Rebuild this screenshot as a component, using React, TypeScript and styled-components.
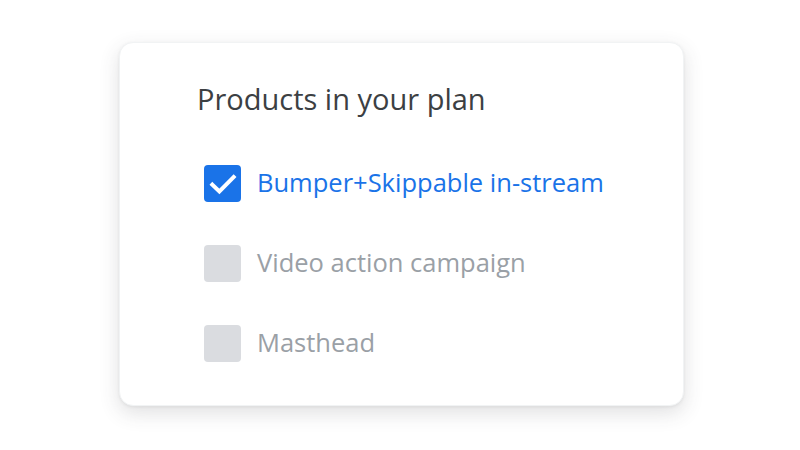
import { createGlobalStyle, styled } from "styled-components";

const GlobalStyle = createGlobalStyle`
  html, body {
    margin: 0;
    padding: 0;
    background: #ffffff;
  }
  body {
    font-family: "Open Sans", "Noto Sans", sans-serif;
  }
`;

const Page = styled.div`
  width: 800px;
  height: 450px;
  padding: 42px 0 0 119px;
  box-sizing: border-box;
`;

const Card = styled.div`
  width: 565px;
  height: 364px;
  box-sizing: border-box;
  padding: 38px 0 0 77px;
  background: #ffffff;
  border-radius: 14px;
  border: 1px solid #f1f3f4;
  box-shadow: 0 7px 20px rgba(60, 64, 67, 0.16), 0 1px 3px rgba(60, 64, 67, 0.08);
`;

const Title = styled.h2`
  margin: 0;
  font-size: 29px;
  font-weight: 400;
  line-height: 36px;
  color: #3c4043;
`;

const List = styled.ul`
  list-style: none;
  margin: 48px 0 0 7px;
  padding: 0;
  display: flex;
  flex-direction: column;
  gap: 43px;
`;

const Row = styled.li`
  display: flex;
  align-items: center;
  gap: 16px;
  height: 37px;
`;

const Box = styled.span<{ $checked: boolean }>`
  width: 37px;
  height: 37px;
  flex: none;
  border-radius: 4px;
  background: ${(p) => (p.$checked ? "#1a73e8" : "#dadce0")};
  display: flex;
  align-items: center;
  justify-content: center;
`;

const Label = styled.span<{ $checked: boolean }>`
  font-size: 25.5px;
  line-height: 32px;
  margin-bottom: 3px;
  color: ${(p) => (p.$checked ? "#1a73e8" : "#9aa0a6")};
  font-weight: 400;
`;

const items = [
  { name: "Bumper+Skippable in-stream", checked: true },
  { name: "Video action campaign", checked: false },
  { name: "Masthead", checked: false },
];

export default function App() {
  return (
    <>
      <GlobalStyle />
      <Page>
        <Card>
          <Title>Products in your plan</Title>
          <List>
            {items.map((item) => (
              <Row key={item.name}>
                <Box $checked={item.checked}>
                  {item.checked && (
                    <svg width="32" height="32" viewBox="0 0 24 24">
                      <path
                        d="M4 12.5 L9.3 17.6 L20 6.8"
                        fill="none"
                        stroke="#ffffff"
                        strokeWidth="3"
                        strokeLinecap="square"
                        strokeLinejoin="miter"
                      />
                    </svg>
                  )}
                </Box>
                <Label $checked={item.checked}>{item.name}</Label>
              </Row>
            ))}
          </List>
        </Card>
      </Page>
    </>
  );
}
